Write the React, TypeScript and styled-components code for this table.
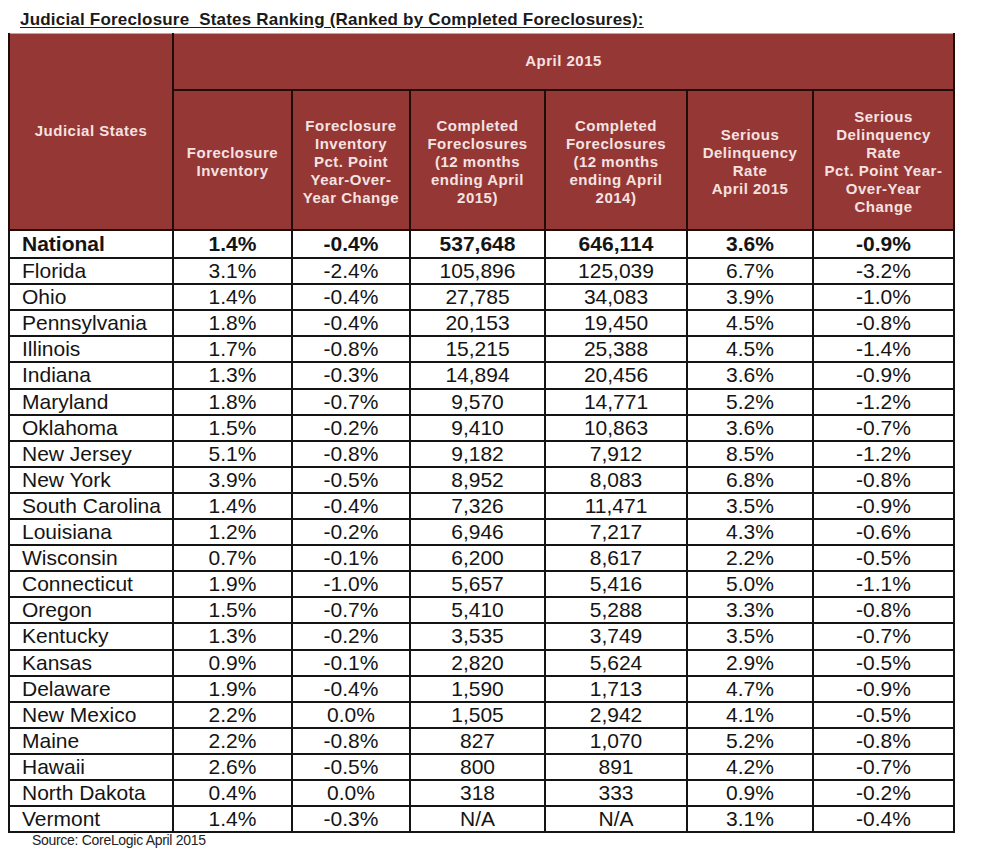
import React from "react";
import styled, { createGlobalStyle } from "styled-components";

const GlobalStyle = createGlobalStyle`
  html, body { margin: 0; padding: 0; background: #ffffff; }
  body { font-family: "Liberation Sans", Arial, sans-serif; }
`;

const Page = styled.div`
  width: 981px;
  height: 859px;
  padding-left: 8px;
  box-sizing: border-box;
  background: #fff;
`;

const Title = styled.div`
  margin: 10px 0 0 12px;
  height: 20px;
  line-height: 20px;
  font-size: 17px;
  font-weight: bold;
  letter-spacing: 0.2px;
  color: #1a1a1a;
  text-decoration: underline;
  text-underline-offset: 2px;
  white-space: pre;
`;

const Table = styled.table`
  margin-top: 3px;
  border-collapse: collapse;
  table-layout: fixed;
  width: 946px;
`;

const HeadCell = styled.th<{ $h?: number }>`
  background: #953735;
  color: #f4e2e1;
  font-size: 15px;
  font-weight: bold;
  letter-spacing: 0.5px;
  line-height: 18px;
  text-align: center;
  vertical-align: middle;
  padding: 0 4px;
  height: ${(p) => p.$h ?? 56}px;
  border: 2px solid #1f0d0c;
  border-top: 1px solid #d99b99;
  box-sizing: border-box;
`;

const SubHead = styled(HeadCell)`
  border-top: 2px solid #1f0d0c;
  padding-top: 4px;
`;

const Cell = styled.td<{ $bold?: boolean; $h: number; $left?: boolean }>`
  height: ${(p) => p.$h}px;
  padding: 0;
  padding-left: ${(p) => (p.$left ? "12px" : "0")};
  font-size: 21px;
  line-height: 22px;
  font-weight: ${(p) => (p.$bold ? "bold" : "normal")};
  color: #141414;
  text-align: ${(p) => (p.$left ? "left" : "center")};
  vertical-align: middle;
  border: 2px solid #141414;
  white-space: nowrap;
  box-sizing: border-box;
`;

const Source = styled.div`
  margin-left: 24px;
  font-size: 14px;
  line-height: 15px;
  letter-spacing: -0.3px;
  color: #222;
`;

const cols = [164, 119, 118, 135, 142, 126, 141];

const rows: string[][] = [
  ["National", "1.4%", "-0.4%", "537,648", "646,114", "3.6%", "-0.9%"],
  ["Florida", "3.1%", "-2.4%", "105,896", "125,039", "6.7%", "-3.2%"],
  ["Ohio", "1.4%", "-0.4%", "27,785", "34,083", "3.9%", "-1.0%"],
  ["Pennsylvania", "1.8%", "-0.4%", "20,153", "19,450", "4.5%", "-0.8%"],
  ["Illinois", "1.7%", "-0.8%", "15,215", "25,388", "4.5%", "-1.4%"],
  ["Indiana", "1.3%", "-0.3%", "14,894", "20,456", "3.6%", "-0.9%"],
  ["Maryland", "1.8%", "-0.7%", "9,570", "14,771", "5.2%", "-1.2%"],
  ["Oklahoma", "1.5%", "-0.2%", "9,410", "10,863", "3.6%", "-0.7%"],
  ["New Jersey", "5.1%", "-0.8%", "9,182", "7,912", "8.5%", "-1.2%"],
  ["New York", "3.9%", "-0.5%", "8,952", "8,083", "6.8%", "-0.8%"],
  ["South Carolina", "1.4%", "-0.4%", "7,326", "11,471", "3.5%", "-0.9%"],
  ["Louisiana", "1.2%", "-0.2%", "6,946", "7,217", "4.3%", "-0.6%"],
  ["Wisconsin", "0.7%", "-0.1%", "6,200", "8,617", "2.2%", "-0.5%"],
  ["Connecticut", "1.9%", "-1.0%", "5,657", "5,416", "5.0%", "-1.1%"],
  ["Oregon", "1.5%", "-0.7%", "5,410", "5,288", "3.3%", "-0.8%"],
  ["Kentucky", "1.3%", "-0.2%", "3,535", "3,749", "3.5%", "-0.7%"],
  ["Kansas", "0.9%", "-0.1%", "2,820", "5,624", "2.9%", "-0.5%"],
  ["Delaware", "1.9%", "-0.4%", "1,590", "1,713", "4.7%", "-0.9%"],
  ["New Mexico", "2.2%", "0.0%", "1,505", "2,942", "4.1%", "-0.5%"],
  ["Maine", "2.2%", "-0.8%", "827", "1,070", "5.2%", "-0.8%"],
  ["Hawaii", "2.6%", "-0.5%", "800", "891", "4.2%", "-0.7%"],
  ["North Dakota", "0.4%", "0.0%", "318", "333", "0.9%", "-0.2%"],
  ["Vermont", "1.4%", "-0.3%", "N/A", "N/A", "3.1%", "-0.4%"],
];

const subHeads: React.ReactNode[] = [
  <>Foreclosure<br />Inventory</>,
  <>Foreclosure<br />Inventory<br />Pct. Point<br />Year-Over-<br />Year Change</>,
  <>Completed<br />Foreclosures<br />(12 months<br />ending April<br />2015)</>,
  <>Completed<br />Foreclosures<br />(12 months<br />ending April<br />2014)</>,
  <>Serious<br />Delinquency<br />Rate<br />April 2015</>,
  <>Serious<br />Delinquency<br />Rate<br />Pct. Point Year-<br />Over-Year<br />Change</>,
];

export default function App() {
  return (
    <>
      <GlobalStyle />
      <Page>
        <Title>{"Judicial Foreclosure  States Ranking (Ranked by Completed Foreclosures):"}</Title>
        <Table>
          <colgroup>
            {cols.map((w, i) => (
              <col key={i} style={{ width: w }} />
            ))}
          </colgroup>
          <thead>
            <tr>
              <HeadCell rowSpan={2}>Judicial States</HeadCell>
              <HeadCell colSpan={6} $h={56}>April 2015</HeadCell>
            </tr>
            <tr>
              {subHeads.map((h, i) => (
                <SubHead key={i} $h={140}>{h}</SubHead>
              ))}
            </tr>
          </thead>
          <tbody>
            {rows.map((r, ri) => (
              <tr key={r[0]}>
                {r.map((v, ci) => (
                  <Cell
                    key={ci}
                    $h={ri === 0 ? 28 : ri % 10 === 5 ? 27 : 26}
                    $bold={ri === 0}
                    $left={ci === 0}
                  >
                    {v}
                  </Cell>
                ))}
              </tr>
            ))}
          </tbody>
        </Table>
        <Source>Source: CoreLogic April 2015</Source>
      </Page>
    </>
  );
}
